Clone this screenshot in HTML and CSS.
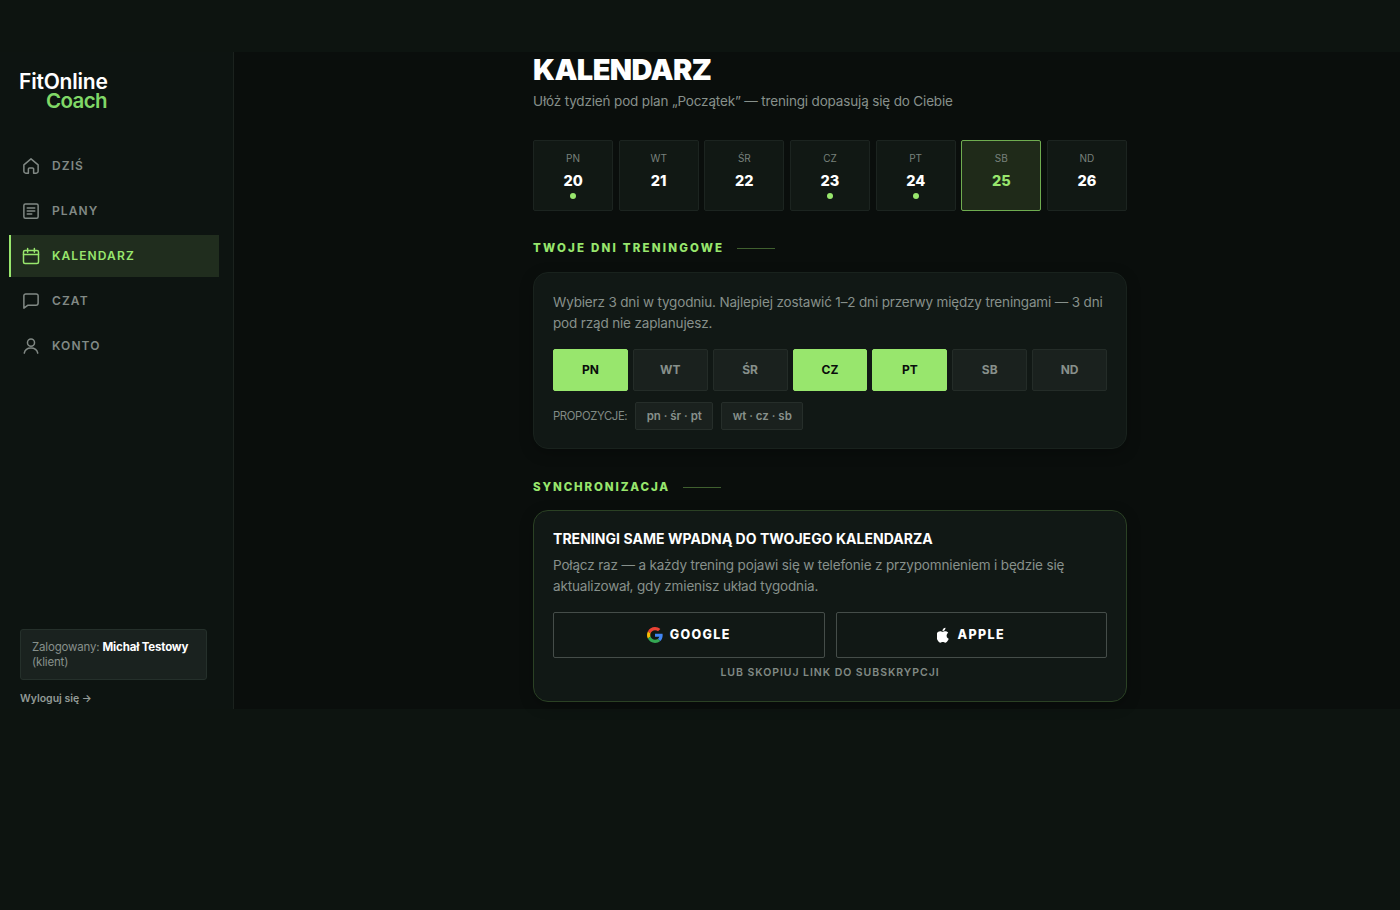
FILE: index.html
```html
<!DOCTYPE html>
<html lang="pl">
  <head>
    <meta charset="UTF-8" />
    <meta name="viewport" content="width=device-width, initial-scale=1.0" />
    <title>FitOnline Coach – Kalendarz</title>
    <link rel="stylesheet" href="styles.css" />
  </head>
  <body>
    <div class="app">
      <aside class="sidebar">
        <div class="logo">
          <span class="logo-top">FitOnline</span>
          <span class="logo-bottom">Coach</span>
        </div>

        <nav class="nav">
          <a class="nav-item">
            <svg viewBox="0 0 24 24"><path d="M2.500 10.500 12 2.500l9.500 8V19a2.500 2.500 0 0 1-2.500 2.500H15.500V16a1.500 1.500 0 0 0-1.500-1.500h-4A1.500 1.500 0 0 0 8.500 16v5.500H5A2.500 2.500 0 0 1 2.500 19z" /></svg>
            <span>DZIŚ</span>
          </a>
          <a class="nav-item">
            <svg viewBox="0 0 24 24"><rect x="2.500" y="2.500" width="19" height="19" rx="2" /><path d="M7 8h10M7 12h10M7 16h6" /></svg>
            <span>PLANY</span>
          </a>
          <a class="nav-item active">
            <svg viewBox="0 0 24 24"><rect x="2" y="4.500" width="20" height="17.500" rx="2" /><path d="M2 10h20M7.500 2v5M16.500 2v5" /></svg>
            <span>KALENDARZ</span>
          </a>
          <a class="nav-item">
            <svg viewBox="0 0 24 24"><path d="M21.500 5v9.500a3 3 0 0 1-3 3H8L2.500 21.500V5a2.500 2.500 0 0 1 2.500-2.500h14A2.500 2.500 0 0 1 21.500 5z" /></svg>
            <span>CZAT</span>
          </a>
          <a class="nav-item">
            <svg viewBox="0 0 24 24"><circle cx="12" cy="7.500" r="4.700" /><path d="M3 21.500c1-5 4.500-7 9-7s8 2 9 7" /></svg>
            <span>KONTO</span>
          </a>
        </nav>

        <div class="account">
          <div class="account-box">Zalogowany: <strong>Michał Testowy</strong> (klient)</div>
          <a class="logout">Wyloguj się →</a>
        </div>
      </aside>

      <main class="main">
        <div class="content">
          <h1>KALENDARZ</h1>
          <p class="lead">Ułóż tydzień pod plan „Początek” — treningi dopasują się do Ciebie</p>

          <div class="week">
            <div class="day"><span>PN</span><b>20</b><i class="dot"></i></div>
            <div class="day"><span>WT</span><b>21</b></div>
            <div class="day"><span>ŚR</span><b>22</b></div>
            <div class="day"><span>CZ</span><b>23</b><i class="dot"></i></div>
            <div class="day"><span>PT</span><b>24</b><i class="dot"></i></div>
            <div class="day today"><span>SB</span><b>25</b></div>
            <div class="day"><span>ND</span><b>26</b></div>
          </div>

          <h2 class="section-title days-title">TWOJE DNI TRENINGOWE</h2>
          <section class="card">
            <p class="text">Wybierz 3 dni w tygodniu. Najlepiej zostawić 1–2 dni przerwy między treningami — 3 dni<br />pod rząd nie zaplanujesz.</p>
            <div class="picker">
              <button class="pick on">PN</button>
              <button class="pick">WT</button>
              <button class="pick">ŚR</button>
              <button class="pick on">CZ</button>
              <button class="pick on">PT</button>
              <button class="pick">SB</button>
              <button class="pick">ND</button>
            </div>
            <div class="presets">
              <span>PROPOZYCJE:</span>
              <button class="preset">pn · śr · pt</button>
              <button class="preset">wt · cz · sb</button>
            </div>
          </section>

          <h2 class="section-title sync-title">SYNCHRONIZACJA</h2>
          <section class="card sync">
            <h3>TRENINGI SAME WPADNĄ DO TWOJEGO KALENDARZA</h3>
            <p class="text">Połącz raz — a każdy trening pojawi się w telefonie z przypomnieniem i będzie się<br />aktualizował, gdy zmienisz układ tygodnia.</p>
            <div class="providers">
              <button class="provider">
                <svg class="google" viewBox="0 0 48 48">
                  <path fill="#ea4335" d="M24 9.500c3.540 0 6.710 1.220 9.210 3.600l6.850-6.850C35.900 2.380 30.470 0 24 0 14.620 0 6.510 5.380 2.560 13.220l7.980 6.190C12.430 13.720 17.740 9.500 24 9.500z" />
                  <path fill="#4285f4" d="M46.980 24.550c0-1.570-.15-3.090-.38-4.550H24v9.020h12.940c-.58 2.960-2.260 5.480-4.780 7.180l7.730 6c4.510-4.180 7.090-10.360 7.090-17.650z" />
                  <path fill="#fbbc05" d="M10.530 28.590A14.500 14.500 0 0 1 9.770 24c0-1.600.27-3.140.76-4.590l-7.980-6.190A24 24 0 0 0 0 24c0 3.880.92 7.540 2.560 10.780z" />
                  <path fill="#34a853" d="M24 48c6.480 0 11.930-2.130 15.890-5.810l-7.730-6c-2.150 1.450-4.920 2.300-8.160 2.300-6.260 0-11.570-4.220-13.470-9.910l-7.970 6.190C6.510 42.620 14.620 48 24 48z" />
                </svg>
                <span>GOOGLE</span>
              </button>
              <button class="provider">
                <svg class="apple" viewBox="4 1 16.500 21.500">
                  <path d="M16.400 12.700c0-2.600 2.100-3.800 2.200-3.900-1.200-1.800-3.100-2-3.700-2-1.600-.2-3.100.9-3.900.9s-2-.9-3.300-.9c-1.700 0-3.300 1-4.200 2.500-1.800 3.100-.5 7.700 1.300 10.200.8 1.200 1.900 2.600 3.200 2.600s1.800-.8 3.300-.8 2 .8 3.400.8 2.300-1.200 3.100-2.500c1-1.400 1.400-2.800 1.400-2.900-.1 0-2.800-1-2.800-4zM13.900 5.100c.7-.9 1.200-2 1-3.200-1 .1-2.300.7-3 1.600-.6.800-1.200 1.900-1 3.100 1.100.1 2.300-.6 3-1.500z" />
                </svg>
                <span>APPLE</span>
              </button>
            </div>
            <a class="copy-link">LUB SKOPIUJ LINK DO SUBSKRYPCJI</a>
          </section>
        </div>
      </main>
    </div>
  </body>
</html>
```

FILE: styles.css
```css
* {
  box-sizing: border-box;
}
body {
  margin: 0;
  height: 910px;
  padding-top: 52px;
  background: #0d1410;
  color: #fff;
  font-family: Inter, sans-serif;
  overflow: hidden;
}
h1,
h2,
h3,
p {
  margin: 0;
}
button {
  font-family: inherit;
  padding: 0;
  cursor: pointer;
}
.app {
  display: flex;
  height: 657px;
}

/* sidebar */
.sidebar {
  display: flex;
  flex-direction: column;
  width: 234px;
  padding: 21px 14px 3px 9px;
  background: #0d1411;
  border-right: 1px solid #1b221e;
}
.logo {
  display: flex;
  flex-direction: column;
  width: 88px;
  margin-left: 10px;
  font-size: 21px;
  font-weight: 600;
  line-height: 18.500px;
  letter-spacing: -0.200px;
}
.logo-bottom {
  align-self: flex-end;
  color: #80d867;
  font-size: 20.500px;
  letter-spacing: -0.600px;
}
.nav {
  display: flex;
  flex-direction: column;
  gap: 3px;
  margin-top: 35px;
}
.nav-item {
  display: flex;
  align-items: center;
  gap: 12px;
  height: 42px;
  width: 210px;
  padding: 0 0 1px 11px;
  border-left: 2px solid transparent;
  color: #818985;
  font-size: 12px;
  font-weight: 600;
  letter-spacing: 1.100px;
}
.nav-item svg {
  width: 18px;
  height: 18px;
  fill: none;
  stroke: currentColor;
  stroke-width: 2;
  stroke-linecap: round;
  stroke-linejoin: round;
}
.nav-item.active {
  background: #202d1e;
  border-left-color: #98e66d;
  color: #98e66d;
}
.account {
  margin-top: auto;
  margin-left: 11px;
}
.account-box {
  width: 187px;
  height: 51px;
  padding: 10px 11px;
  background: #1a221f;
  border: 1px solid #25302b;
  border-radius: 3px;
  color: #87908b;
  font-size: 11.500px;
  line-height: 15px;
  letter-spacing: -0.170px;
}
.account-box strong {
  color: #fff;
}
.logout {
  display: block;
  margin-top: 11px;
  color: #929a96;
  font-size: 10.500px;
  font-weight: 600;
  line-height: 15px;
}

/* calendar */
.main {
  flex: 1;
  display: flex;
  padding-left: 299px;
  background: #0a0e0c;
}
.content {
  width: 594px;
}
h1 {
  margin-top: 1px;
  font-size: 29px;
  font-weight: 900;
  line-height: 34px;
  letter-spacing: -0.600px;
}
.lead {
  margin-top: 4px;
  color: #87908b;
  font-size: 13.500px;
  line-height: 21px;
  letter-spacing: -0.160px;
}
.week {
  display: grid;
  grid-template-columns: repeat(7, 1fr);
  gap: 5.600px;
  margin-top: 28px;
}
.day {
  display: flex;
  flex-direction: column;
  align-items: center;
  height: 71px;
  padding-top: 10px;
  background: #111814;
  border: 1px solid #1c2420;
  border-radius: 2px;
}
.day span {
  color: #78817c;
  font-size: 10px;
  line-height: 15px;
}
.day b {
  margin-top: 6px;
  font-size: 14.500px;
  font-weight: 800;
  line-height: 18px;
}
.dot {
  width: 6px;
  height: 6px;
  margin-top: 3px;
  background: #98e66d;
  border-radius: 50%;
}
.day.today {
  background: #1f2a19;
  border-color: #6fac50;
}
.today b {
  color: #98e66d;
}
.section-title {
  display: flex;
  align-items: center;
  gap: 13px;
  color: #98e66d;
  font-size: 11.500px;
  font-weight: 800;
  line-height: 16px;
  letter-spacing: 2.200px;
}
.section-title::after {
  content: "";
  width: 38px;
  height: 1px;
  background: #40602f;
}
.days-title {
  margin-top: 29px;
}
.sync-title {
  margin-top: 30px;
  letter-spacing: 1.870px;
}
.card {
  height: 177px;
  margin-top: 16px;
  padding: 19px;
  background: #111815;
  border: 1px solid #19221d;
  border-radius: 15px;
  box-shadow: 0 4px 14px rgba(0, 0, 0, 0.25);
}
.text {
  color: #87908b;
  font-size: 13.500px;
  line-height: 21.300px;
  letter-spacing: -0.160px;
  white-space: nowrap;
}
.picker {
  display: grid;
  grid-template-columns: repeat(7, 1fr);
  gap: 5px;
  margin-top: 14px;
}
.pick {
  height: 42px;
  background: #1a211e;
  border: 1px solid #242c28;
  border-radius: 2px;
  color: #87908b;
  font-size: 12px;
  font-weight: 700;
}
.pick.on {
  background: #98e66d;
  border-color: #98e66d;
  color: #0a0d0c;
}
.presets {
  display: flex;
  align-items: center;
  gap: 8px;
  margin-top: 11px;
  color: #818a85;
  font-size: 11.300px;
  letter-spacing: -0.350px;
}
.preset {
  height: 28px;
  width: 78px;
  background: #1a211e;
  border: 1px solid #262e2a;
  border-radius: 2px;
  color: #87908b;
  font-size: 11.500px;
  font-weight: 600;
}
.preset:last-child {
  width: 82px;
}
.sync {
  height: 192px;
  margin-top: 15px;
  padding-top: 18px;
  border-color: #2b4124;
}
.sync h3 {
  margin-bottom: 6px;
  font-size: 14px;
  font-weight: 700;
  line-height: 20px;
  letter-spacing: 0.040px;
  white-space: nowrap;
}
.providers {
  display: grid;
  grid-template-columns: 1fr 1fr;
  gap: 11px;
  margin-top: 14px;
}
.provider {
  display: flex;
  align-items: center;
  justify-content: center;
  gap: 7px;
  height: 46px;
  background: none;
  border: 1px solid #454d49;
  border-radius: 2px;
  color: #fff;
  font-size: 12.500px;
  font-weight: 800;
  letter-spacing: 1.400px;
}
.google {
  width: 16px;
  height: 16px;
}
.apple {
  width: 13px;
  height: 16px;
  fill: #fff;
}
.copy-link {
  display: block;
  margin-top: 7px;
  color: #818a85;
  font-size: 10.500px;
  font-weight: 600;
  line-height: 16px;
  letter-spacing: 0.950px;
  text-align: center;
}
```
